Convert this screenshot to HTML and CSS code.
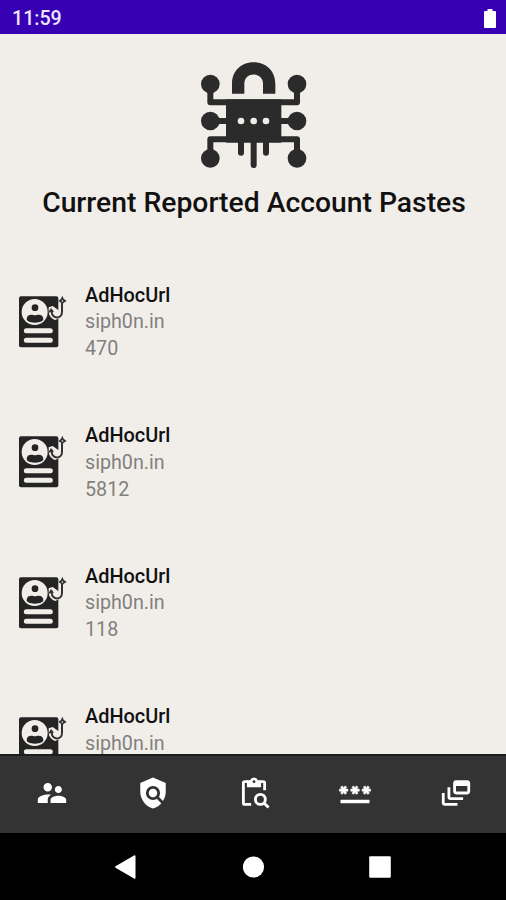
FILE: index.html
```
<!DOCTYPE html>
<html lang="en">
<head>
  <meta charset="utf-8">
  <meta content='width=device-width, initial-scale=1.0' name='viewport' />
  <title>Current Reported Account Pastes</title>
  <link rel="stylesheet" href="styles.css">
</head>
<body>
  <svg class="defs" width="0" height="0">
    <symbol id="paste" viewBox="0 0 192 210">
      <rect x="27" y="31" width="118" height="153" rx="6" fill="#242424"/>
      <circle cx="74" cy="78" r="39" fill="#f1eeea"/>
      <circle cx="75" cy="65" r="10" fill="#242424"/>
      <path d="M50 99c0-9 6-13 14-13 4 0 7 2 11 2s7-2 11-2c8 0 14 4 14 13 0 6-9 11-25 11S50 105 50 99z" fill="#242424"/>
      <path d="M49 134h72M49 163h72" stroke="#f1eeea" stroke-width="15" stroke-linecap="round"/>
      <path d="M116 64l12-4 20 14v22l-12 6c-12-3-20-14-20-26z" fill="#f1eeea"/>
      <path d="M150 50v31" stroke="#f1eeea" stroke-width="6"/>
      <path d="M156 48v29c0 23-30 23-31 0v-6" fill="none" stroke="#333" stroke-width="6"/>
      <path d="M114 80l9-14 9 11z" fill="#333"/>
      <path d="M157 29l4 9 9 7-9 5-4 7-4-7-8-5 8-7z" fill="#333"/>
      <circle cx="157" cy="45" r="2.5" fill="#f1eeea"/>
    </symbol>
  </svg>
  <div class="container">
    <div class="status">
      <span>11:59</span>
      <svg class="battery" width="12" height="19" viewBox="0 0 12 19"><path d="M3.5 2V0h5v2H11a1 1 0 0 1 1 1v15a1 1 0 0 1-1 1H1a1 1 0 0 1-1-1V3a1 1 0 0 1 1-1z" fill="#fff"/></svg>
    </div>

    <div class="content">
      <svg class="logo" width="130" height="130" viewBox="0 0 390 390">
        <g fill="#2b2b2b">
          <circle cx="61" cy="102" r="28"/>
          <circle cx="321" cy="102" r="28"/>
          <circle cx="61" cy="213" r="28"/>
          <circle cx="321" cy="213" r="28"/>
          <circle cx="61" cy="325" r="28"/>
          <circle cx="321" cy="325" r="28"/>
          <rect x="108" y="148" width="166" height="130"/>
          <path d="M126 131v-30c0-86 130-86 130 0v30h-37v-30c0-37-56-37-56 0v30z"/>
        </g>
        <g fill="none" stroke="#2b2b2b" stroke-width="18" stroke-linejoin="round">
          <path d="M61 102v55h260v-55M61 325v-57h260v57"/>
          <path d="M61 213h260"/>
          <path d="M153 268v40M191 268v77M228 268v40" stroke-linecap="round"/>
        </g>
        <g fill="#f1eeea">
          <circle cx="153" cy="213" r="10"/>
          <circle cx="191" cy="213" r="10"/>
          <circle cx="228" cy="213" r="10"/>
        </g>
      </svg>
      <h1 class="title">Current Reported Account Pastes</h1>

      <div class="list">
        <div class="item">
          <svg class="item-icon"><use href="#paste"/></svg>
          <div class="item-text">
            <div class="name">AdHocUrl</div>
            <div>siph0n.in</div>
            <div>470</div>
          </div>
        </div>
        <div class="item">
          <svg class="item-icon"><use href="#paste"/></svg>
          <div class="item-text">
            <div class="name">AdHocUrl</div>
            <div>siph0n.in</div>
            <div>5812</div>
          </div>
        </div>
        <div class="item">
          <svg class="item-icon"><use href="#paste"/></svg>
          <div class="item-text">
            <div class="name">AdHocUrl</div>
            <div>siph0n.in</div>
            <div>118</div>
          </div>
        </div>
        <div class="item">
          <svg class="item-icon"><use href="#paste"/></svg>
          <div class="item-text">
            <div class="name">AdHocUrl</div>
            <div>siph0n.in</div>
          </div>
        </div>
      </div>
    </div>

    <div class="tabs">
      <a class="tab">
        <svg viewBox="0 0 24 24"><path d="M16.5 12c1.38 0 2.49-1.12 2.49-2.5S17.88 7 16.5 7 14 8.12 14 9.5s1.12 2.5 2.5 2.5zM9 11c1.66 0 2.99-1.34 2.99-3S10.66 5 9 5 6 6.34 6 8s1.34 3 3 3zm7.5 3c-1.83 0-5.5.92-5.5 2.75V19h11v-2.25c0-1.83-3.67-2.75-5.5-2.75zM9 13c-2.33 0-7 1.17-7 3.5V19h7v-2.25c0-.85.33-2.34 2.37-3.47C10.5 13.1 9.66 13 9 13z"/></svg>
      </a>
      <a class="tab">
        <svg viewBox="0 0 24 24">
          <path d="M12 1l9 4v6c0 5.55-3.84 10.74-9 12-5.16-1.26-9-6.45-9-12V5z"/>
          <circle class="cut" cx="12" cy="12" r="4"/>
          <path class="cut" d="M14.8 14.8l5 5"/>
        </svg>
      </a>
      <a class="tab">
        <svg viewBox="0 0 24 24">
          <path class="line" d="M10 20H5.5a1 1 0 0 1-1-1V5a1 1 0 0 1 1-1H8M16 4h2.5a1 1 0 0 1 1 1v5"/>
          <path d="M7 3h2.2a3 3 0 0 1 5.6 0H17v5H7zm5 0a1 1 0 1 0 0 2 1 1 0 0 0 0-2z" fill-rule="evenodd"/>
          <circle class="line" cx="16.5" cy="16.5" r="3.5"/>
          <path class="line" d="M19 19l3.3 3.3"/>
        </svg>
      </a>
      <a class="tab">
        <svg viewBox="0 0 24 24"><path d="M2 17h20v2H2v-2zm1.15-4.05L4 11.47l.85 1.48 1.3-.75-.85-1.48H7v-1.5H5.3l.85-1.47L4.85 7 4 8.47 3.15 7l-1.3.75.85 1.47H1v1.5h1.7l-.85 1.48 1.3.75zm6.7-.75l1.3.75.85-1.48.85 1.48 1.3-.75-.85-1.48H15v-1.5h-1.7l.85-1.47-1.3-.75L12 8.47 11.15 7l-1.3.75.85 1.47H9v1.5h1.7l-.85 1.48zM23 9.22h-1.7l.85-1.47-1.3-.75L20 8.47 19.15 7l-1.3.75.85 1.47H17v1.5h1.7l-.85 1.48 1.3.75.85-1.48.85 1.48 1.3-.75-.85-1.48H23v-1.5z" stroke="#fff" stroke-width=".4"/></svg>
      </a>
      <a class="tab">
        <svg viewBox="0 0 24 24"><path d="M8 8H6v7c0 1.1.9 2 2 2h9v-2H8V8z"/><path d="M20 3h-8c-1.1 0-2 .9-2 2v6c0 1.1.9 2 2 2h8c1.1 0 2-.9 2-2V5c0-1.1-.9-2-2-2zm0 8h-8V7h8v4z"/><path d="M4 12H2v7c0 1.1.9 2 2 2h9v-2H4v-7z"/></svg>
      </a>
    </div>

    <div class="system">
      <svg width="24" height="26" viewBox="0 0 24 26"><path d="M1.5 12.2L20 1.4q1.5-.8 1.5.8v21.6q0 1.6-1.5.8L1.5 13.8q-1-.8 0-1.6z"/></svg>
      <svg width="24" height="26" viewBox="0 0 24 26"><circle cx="12.5" cy="13" r="10.6"/></svg>
      <svg width="24" height="26" viewBox="0 0 24 26"><rect x="1.2" y="2.2" width="21.6" height="21.6" rx="1.2"/></svg>
    </div>
  </div>
</body>
</html>
```
FILE: styles.css
```
html, body {
  margin: 0;
  width: 100%;
  height: 100%;
}
body {
  font-family: Roboto, "Liberation Sans", sans-serif;
  overflow: hidden;
}

.defs {
  display: none;
}

.container {
  display: flex;
  flex-direction: column;
  height: 900px;
  background: #f1eeea;
}

.status {
  display: flex;
  align-items: center;
  justify-content: space-between;
  box-sizing: border-box;
  height: 34px;
  padding: 2px 10px 0 12px;
  background: #3700b3;
  color: #ece6ff;
  font-size: 19.6px;
  font-weight: 500;
  flex: none;
}

.content {
  flex: 1;
  min-height: 0;
  overflow: hidden;
  padding-top: 16px;
}

.logo {
  display: block;
  margin-left: 190px;
}

.title {
  margin: 7px 0 0;
  padding-left: 2px;
  font-size: 28.3px;
  line-height: 32px;
  font-weight: 500;
  text-align: center;
  color: #111;
  white-space: nowrap;
}

.list {
  padding: 63.5px 0 0 10px;
}

.item {
  display: flex;
  height: 140.6px;
}

.item-icon {
  width: 64px;
  height: 70px;
  margin-top: 3px;
  flex: none;
}

.item-text {
  margin-left: 11px;
  font-size: 19.7px;
  line-height: 26.8px;
  color: #82807e;
}

.item-text .name {
  font-size: 19.9px;
  font-weight: 500;
  color: #111;
}

.tabs {
  display: flex;
  align-items: center;
  box-sizing: border-box;
  height: 79px;
  padding: 0 0 3px 1px;
  flex: none;
  background: #333;
  border-top: 2px solid #1c1c1c;
}

.tab {
  flex: 1;
  display: flex;
  justify-content: center;
}

.tab svg {
  width: 34px;
  height: 34px;
  fill: #fff;
}

.tab .line {
  fill: none;
  stroke: #fff;
  stroke-width: 2;
}

.tab .cut {
  fill: none;
  stroke: #333;
  stroke-width: 2;
}

.system {
  display: flex;
  align-items: center;
  justify-content: space-between;
  box-sizing: border-box;
  height: 67px;
  padding: 0 114px;
  flex: none;
  background: #000;
}

.system svg {
  fill: #fff;
}
```
